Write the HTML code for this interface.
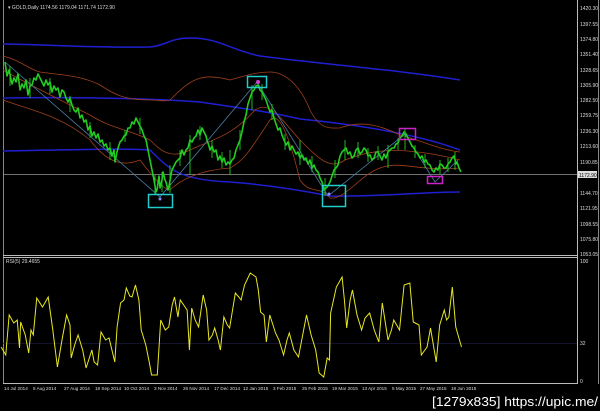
<!DOCTYPE html>
<html><head><meta charset="utf-8"><style>
html,body{margin:0;padding:0;background:#000;width:600px;height:411px;overflow:hidden}
svg{display:block}
text{font-family:"Liberation Sans",sans-serif}
</style></head><body>
<svg width="600" height="411" viewBox="0 0 600 411">
<rect width="600" height="411" fill="#000"/>
<line x1="3.5" y1="0" x2="3.5" y2="384" stroke="#888" stroke-width="1"/>
<line x1="577.5" y1="0" x2="577.5" y2="384" stroke="#bbb" stroke-width="1"/>
<line x1="598.5" y1="0" x2="598.5" y2="384" stroke="#888" stroke-width="1"/>
<line x1="3" y1="255.5" x2="577" y2="255.5" stroke="#bbb"/>
<line x1="3" y1="257.5" x2="577" y2="257.5" stroke="#bbb"/>
<line x1="3" y1="383.5" x2="577" y2="383.5" stroke="#bbb"/>
<text x="8" y="9" font-size="5" fill="#ddd">▾ GOLD,Daily  1174.56  1179.04  1171.74  1172.90</text>
<g font-size="5" fill="#ddd">
<text x="580" y="10">1420.30</text><text x="580" y="26">1397.55</text><text x="580" y="41">1374.80</text>
<text x="580" y="56">1351.40</text><text x="580" y="72">1328.65</text><text x="580" y="87">1305.90</text>
<text x="580" y="102">1282.50</text><text x="580" y="117">1259.75</text><text x="580" y="133">1236.30</text>
<text x="580" y="148">1213.60</text><text x="580" y="164">1190.85</text>
<text x="580" y="195">1144.70</text><text x="580" y="210">1121.95</text><text x="580" y="226">1098.55</text>
<text x="580" y="241">1075.80</text><text x="580" y="256">1053.05</text>
<text x="580" y="263">100</text><text x="580" y="345">32</text><text x="580" y="383">0</text>
</g>
<rect x="578" y="171" width="19" height="7" fill="#ddd"/>
<text x="579" y="177" font-size="5" fill="#000">1172.90</text>
<line x1="3" y1="174.5" x2="577" y2="174.5" stroke="#999" stroke-width="0.8"/>
<g fill="none" stroke="#1f1fd0" stroke-width="1.5">
<path d="M3,44 C40,44 80,48 150,47 C165,46 170,38 190,38 C220,38 230,50 260,56 C320,64 400,70 460,80"/>
<path d="M3,98 C60,97 150,98 200,102 C240,108 270,112 300,119 C360,125 420,135 460,150"/>
<path d="M3,151 C60,150 120,148 150,150 C170,170 180,180 230,182 C270,185 300,190 330,196 C380,197 420,192 460,192"/>
</g>
<g fill="none" stroke="#a0401a" stroke-width="0.8">
<path d="M3,56 C20,60 30,70 40,72 C60,75 80,75 100,85 C115,95 125,100 150,100 C160,100 165,102 170,100 C190,80 200,72 230,80 C245,76 255,72 270,72 C285,72 300,85 310,110 C320,130 330,128 340,128 C360,120 380,125 400,135 C420,140 440,150 460,152"/>
<path d="M3,100 C30,110 60,115 90,140 C105,160 120,168 140,160 C155,180 165,190 170,190 C180,180 200,170 230,168 C245,160 250,150 270,120 C280,110 290,140 300,180 C310,195 320,185 330,198 C345,200 360,175 380,168 C400,160 420,172 460,168"/>
<path d="M3,70 C30,85 60,100 90,115 C110,128 130,130 150,140 C160,150 170,160 190,150 C210,140 230,138 255,110 C270,100 280,118 300,140 C320,160 330,170 345,160 C370,150 400,145 460,160"/>
</g>
<polyline fill="none" stroke="#4a7fa8" stroke-width="0.8" points="5,62 160,197 257,82 328,196 405,134 435,182 458,160"/>
<polyline fill="none" stroke="#22cc22" stroke-width="1.6" stroke-linejoin="round" points="5,62 7,76 9,70 12,84 14,78 16,82 18,74 20,90 22,84 24,88 26,80 28,95 30,86 32,85 34,78 36,80 38,74 40,78 42,82 44,86 46,80 48,85 50,82 52,92 54,86 56,90 58,88 60,97 62,90 64,92 66,98 68,102 70,98 72,105 74,110 76,112 78,108 80,118 82,115 84,122 86,120 88,130 90,126 92,136 94,132 96,138 98,134 100,142 102,140 104,146 106,144 108,150 110,148 112,156 114,150 115,162 117,152 118,148 120,142 122,140 124,136 126,135 128,128 130,128 132,122 134,124 136,118 138,122 140,126 142,130 144,136 146,140 148,150 150,160 152,170 154,180 156,192 157,190 159,176 160,188 162,180 163,172 165,180 166,182 168,190 169,186 171,175 172,170 174,166 176,162 178,160 180,158 182,150 184,155 186,150 188,148 190,140 192,142 194,138 196,136 198,130 200,135 202,128 204,132 206,136 207,140 209,146 210,150 212,146 214,152 216,150 218,160 220,156 222,162 224,158 226,165 228,162 230,164 232,160 234,158 236,150 238,145 240,140 242,132 244,122 246,115 248,104 250,98 252,92 254,90 256,86 258,85 260,90 262,92 264,96 266,100 268,106 270,112 272,110 274,118 276,124 278,130 280,128 282,135 284,140 286,145 288,142 290,150 292,146 294,150 296,154 298,152 300,158 302,155 304,160 306,158 308,164 310,160 312,168 314,165 316,170 318,172 320,178 322,182 324,190 326,188 328,186 330,182 332,176 334,170 336,168 338,165 340,156 342,152 344,150 346,148 348,154 350,152 352,158 354,156 356,150 358,148 360,154 362,152 364,148 366,150 368,156 370,155 372,160 374,158 376,152 378,152 380,156 382,160 384,154 386,158 388,152 390,150 392,148 394,148 396,144 398,143 400,138 402,136 404,132 406,134 408,138 410,142 412,146 414,148 416,152 418,154 420,158 422,156 424,162 426,160 428,164 430,165 432,170 434,172 436,168 438,170 440,164 442,165 444,168 446,168 448,164 450,162 452,158 454,156 456,164 457,162 459,168 461,172"/>
<g stroke="#22cc22" stroke-width="0.9">
<line x1="10" y1="66" x2="10" y2="86"/><line x1="30" y1="78" x2="30" y2="98"/><line x1="50" y1="78" x2="50" y2="94"/><line x1="70" y1="96" x2="70" y2="112"/>
<line x1="90" y1="122" x2="90" y2="138"/><line x1="110" y1="142" x2="110" y2="160"/><line x1="125" y1="130" x2="125" y2="142"/>
<line x1="140" y1="118" x2="140" y2="134"/><line x1="155" y1="175" x2="155" y2="195"/><line x1="162" y1="172" x2="162" y2="192"/>
<line x1="170" y1="165" x2="170" y2="193"/><line x1="180" y1="150" x2="180" y2="166"/><line x1="190" y1="135" x2="190" y2="175"/>
<line x1="200" y1="126" x2="200" y2="140"/><line x1="212" y1="140" x2="212" y2="158"/><line x1="222" y1="152" x2="222" y2="168"/>
<line x1="230" y1="150" x2="230" y2="175"/><line x1="240" y1="130" x2="240" y2="150"/><line x1="252" y1="85" x2="252" y2="110"/>
<line x1="262" y1="84" x2="262" y2="100"/><line x1="272" y1="104" x2="272" y2="120"/><line x1="285" y1="134" x2="285" y2="150"/>
<line x1="300" y1="140" x2="300" y2="165"/><line x1="312" y1="156" x2="312" y2="172"/><line x1="325" y1="178" x2="325" y2="196"/>
<line x1="335" y1="160" x2="335" y2="178"/><line x1="345" y1="140" x2="345" y2="160"/><line x1="358" y1="142" x2="358" y2="158"/>
<line x1="368" y1="148" x2="368" y2="162"/><line x1="378" y1="146" x2="378" y2="160"/><line x1="388" y1="145" x2="388" y2="168"/>
<line x1="398" y1="138" x2="398" y2="150"/><line x1="405" y1="128" x2="405" y2="150"/><line x1="415" y1="145" x2="415" y2="158"/>
<line x1="425" y1="154" x2="425" y2="168"/><line x1="440" y1="160" x2="440" y2="175"/><line x1="448" y1="158" x2="448" y2="172"/><line x1="455" y1="152" x2="455" y2="170"/>
</g>
<g fill="none" stroke-width="1.5">
<rect x="247.5" y="76.5" width="19" height="11" stroke="#22cccc"/>
<rect x="148.5" y="194.5" width="24" height="13" stroke="#22cccc"/>
<rect x="322.5" y="185.5" width="23" height="21" stroke="#22cccc"/>
<rect x="399.5" y="128.5" width="16" height="11" stroke="#cc22cc"/>
<rect x="427.5" y="176.5" width="15" height="7" stroke="#cc22cc"/>
</g>
<circle cx="258" cy="82" r="2" fill="#cc44cc"/>
<circle cx="160" cy="199" r="1.5" fill="#8888ff"/>
<circle cx="329" cy="194" r="1.5" fill="#8888ff"/>
<text x="6" y="263" font-size="5" fill="#ddd">RSI(5) 29.4655</text>
<line x1="3" y1="343.5" x2="577" y2="343.5" stroke="#1a1a40" stroke-width="0.8"/>
<g transform="scale(1.148 1)">
<polyline fill="none" stroke="#e8e820" stroke-width="1" vector-effect="non-scaling-stroke" points="1,347 5,355 8,315 12,323 15,320 17,348 18,322 22,335 25,353 27,330 29,335 32,298 37,307 42,297 46,330 50,367 54,340 58,315 61,325 62,358 65,345 68,335 72,350 75,368 80,350 82,362 85,365 88,332 92,340 95,338 100,362 102,327 105,303 108,300 110,288 113,296 115,297 118,285 121,300 123,330 127,345 130,362 132,375 137,375 140,320 144,330 147,327 150,305 152,297 155,317 157,300 160,305 163,310 165,350 167,308 170,320 173,327 177,295 180,310 182,340 185,335 187,328 190,340 192,350 195,317 198,325 200,328 205,293 208,297 210,300 213,285 218,273 223,277 225,290 227,312 230,315 232,342 235,315 240,333 243,340 247,355 250,340 252,333 256,350 260,357 267,315 271,335 275,350 278,373 282,377 285,358 287,360 288,313 293,287 298,277 300,300 302,328 305,300 307,290 311,315 315,330 318,318 322,313 326,330 330,342 333,303 338,340 341,330 343,320 348,330 352,285 357,283 360,322 365,325 367,355 372,347 375,328 380,362 383,325 387,310 389,320 391,317 394,287 397,327 402,347"/>
</g>
<g font-size="4.6" fill="#ddd">
<text x="4" y="390">14 Jul 2014</text><text x="33" y="390">5 Aug 2014</text><text x="64" y="390">27 Aug 2014</text>
<text x="95" y="390">18 Sep 2014</text><text x="124" y="390">10 Oct 2014</text><text x="154" y="390">3 Nov 2014</text>
<text x="183" y="390">26 Nov 2014</text><text x="214" y="390">17 Dec 2014</text><text x="243" y="390">12 Jan 2015</text>
<text x="273" y="390">3 Feb 2015</text><text x="302" y="390">25 Feb 2015</text><text x="332" y="390">19 Mar 2015</text>
<text x="362" y="390">13 Apr 2015</text><text x="392" y="390">5 May 2015</text><text x="420" y="390">27 May 2015</text>
<text x="451" y="390">18 Jun 2015</text>
</g>
<text x="432" y="406" font-size="13" fill="#fff" font-family="Liberation Sans Narrow, Liberation Sans, sans-serif" textLength="166" lengthAdjust="spacingAndGlyphs">[1279x835] https://upic.me/</text>
</svg>
</body></html>
